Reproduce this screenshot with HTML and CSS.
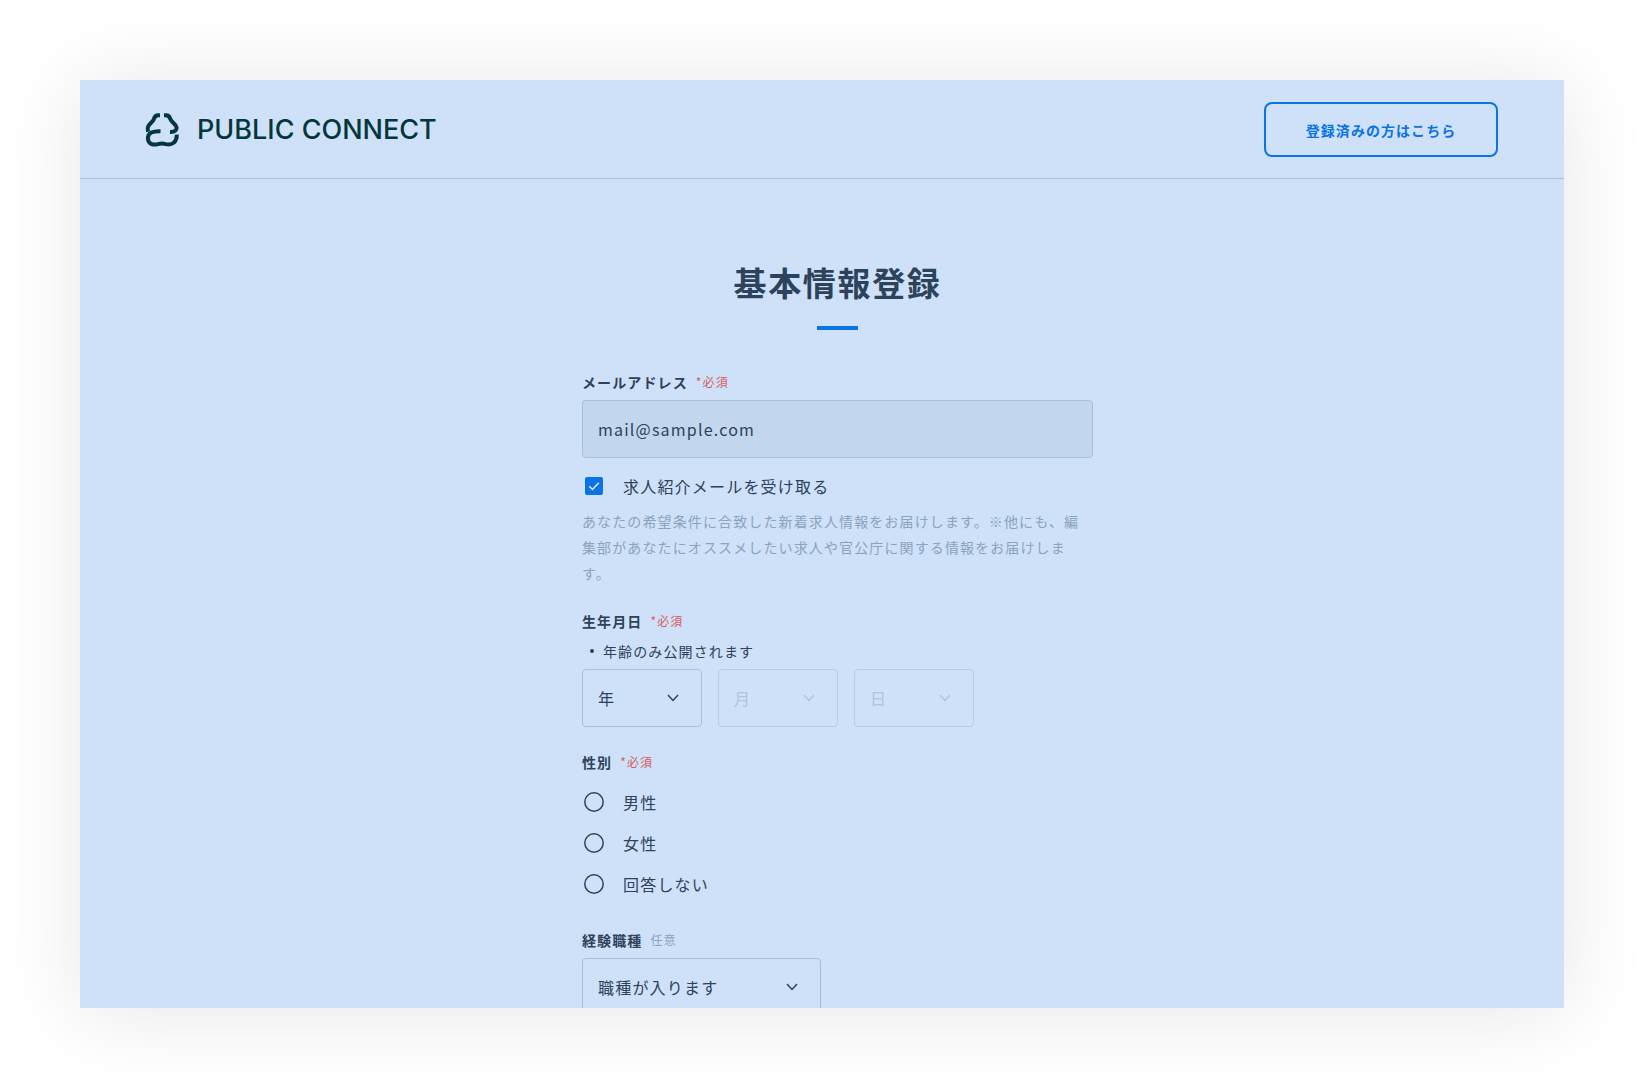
FILE: index.html
```html
<!DOCTYPE html>
<html lang="ja">
<head>
<meta charset="utf-8">
<meta name="viewport" content="width=device-width, initial-scale=1">
<title>基本情報登録 | PUBLIC CONNECT</title>
<link rel="stylesheet" href="styles.css">
</head>
<body>
<div class="window">
  <header class="header">
    <a class="logo" href="#">
      <svg class="logo-mark" viewBox="0 0 34 34" aria-hidden="true">
        <path d="M15 2.200H13C10.400 2.200 9.400 4 8.800 6.200C8 9.200 3.800 10.600 2.900 14.200C2.600 15.800 2.700 17.300 3.100 18.700"/>
        <path d="M19 2.200H21C23.600 2.200 24.800 4 25.400 6.200C26.400 9.200 30.600 10.600 31.500 14.200C32 17 29.800 19.300 25 19"/>
        <path d="M15.500 18.200C8 17.800 2.900 20 2.900 25.200C3.100 31 8.200 32.500 13 31.100C15.700 30.300 18 30.300 20.700 31.100C27 32.600 32 29.300 31.800 21.600"/>
      </svg>
      <span class="logo-text">PUBLIC CONNECT</span>
    </a>
    <button class="login" type="button">登録済みの方はこちら</button>
  </header>

  <main class="main">
    <form class="form">
      <h1 class="title">基本情報登録</h1>

      <div class="field">
        <label class="label" for="email">メールアドレス<span class="required">*必須</span></label>
        <input class="input" id="email" type="email" value="mail@sample.com" readonly>
        <div class="newsletter">
          <label class="choice">
            <span class="mark">
              <input class="checkbox" type="checkbox" checked>
              <svg class="tick" viewBox="0 0 12 12" aria-hidden="true"><path d="M1.200 6.300L4.500 9.500L10.800 2.800"/></svg>
            </span>
            求人紹介メールを受け取る
          </label>
          <p class="help">あなたの希望条件に合致した新着求人情報をお届けします。※他にも、編集部があなたにオススメしたい求人や官公庁に関する情報をお届けします。</p>
        </div>
      </div>

      <div class="field">
        <label class="label" for="year">生年月日<span class="required">*必須</span></label>
        <ul class="notes"><li class="note">年齢のみ公開されます</li></ul>
        <div class="dates">
          <div class="select">
            <select class="control" id="year"><option>年</option></select>
            <svg class="chevron" viewBox="0 0 12 8" aria-hidden="true"><path d="M1 1L6 6.500L11 1"/></svg>
          </div>
          <div class="select disabled">
            <select class="control" aria-label="月" disabled><option>月</option></select>
            <svg class="chevron" viewBox="0 0 12 8" aria-hidden="true"><path d="M1 1L6 6.500L11 1"/></svg>
          </div>
          <div class="select disabled">
            <select class="control" aria-label="日" disabled><option>日</option></select>
            <svg class="chevron" viewBox="0 0 12 8" aria-hidden="true"><path d="M1 1L6 6.500L11 1"/></svg>
          </div>
        </div>
      </div>

      <div class="field" role="radiogroup" aria-labelledby="gender">
        <div class="label" id="gender">性別<span class="required">*必須</span></div>
        <div class="choices">
          <label class="choice">
            <span class="mark">
              <input class="radio" type="radio" name="gender">
              <svg class="ring" viewBox="0 0 20 20" aria-hidden="true"><circle cx="10" cy="10" r="9.200"/></svg>
            </span>
            男性
          </label>
          <label class="choice">
            <span class="mark">
              <input class="radio" type="radio" name="gender">
              <svg class="ring" viewBox="0 0 20 20" aria-hidden="true"><circle cx="10" cy="10" r="9.200"/></svg>
            </span>
            女性
          </label>
          <label class="choice">
            <span class="mark">
              <input class="radio" type="radio" name="gender">
              <svg class="ring" viewBox="0 0 20 20" aria-hidden="true"><circle cx="10" cy="10" r="9.200"/></svg>
            </span>
            回答しない
          </label>
        </div>
      </div>

      <div class="field">
        <label class="label" for="job">経験職種<span class="optional">任意</span></label>
        <div class="select wide">
          <select class="control" id="job"><option>職種が入ります</option></select>
          <svg class="chevron" viewBox="0 0 12 8" aria-hidden="true"><path d="M1 1L6 6.500L11 1"/></svg>
        </div>
      </div>
    </form>
  </main>
</div>
</body>
</html>
```
FILE: styles.css
```css
:root {
  --bg: #cee1f9;
  --text: #2d425b;
  --blue: #0a73e8;
  --line: #a8bfda;
  --muted: #8ba3bd;
  --red: #d85c5c;
}

* {
  box-sizing: border-box;
}

body {
  margin: 0;
  padding: 80px;
  background: #fff;
  color: var(--text);
  font-family: "Noto Sans CJK JP", sans-serif;
  font-size: 16px;
  line-height: 24px;
  letter-spacing: 0.075em;
}

button,
input,
select {
  margin: 0;
  color: inherit;
  font: inherit;
  letter-spacing: inherit;
}

.window {
  height: calc(100vh - 160px);
  overflow: hidden;
  background: var(--bg);
  box-shadow: 0 4px 80px rgba(0, 0, 0, 0.1);
}

.header {
  display: flex;
  align-items: center;
  justify-content: space-between;
  padding: 22px 66px 21px 65px;
  border-bottom: 1px solid var(--line);
}

.logo {
  display: flex;
  align-items: center;
  gap: 18px;
  color: #04373c;
  text-decoration: none;
}

.logo-mark {
  width: 34px;
  height: 34px;
  fill: none;
  stroke: currentColor;
  stroke-width: 4;
}

.logo-text {
  font-family: Inter, sans-serif;
  font-size: 27px;
  font-weight: 500;
  line-height: 32px;
  letter-spacing: 0;
}

.login {
  width: 234px;
  height: 55px;
  padding: 0;
  border: 2px solid var(--blue);
  border-radius: 8px;
  background: transparent;
  color: var(--blue);
  font-size: 14px;
  font-weight: 700;
  letter-spacing: 0.075em;
}

.main {
  padding: 79px 0 80px 31px;
}

.form {
  display: flex;
  flex-direction: column;
  gap: 23px;
  max-width: 511px;
  margin: 0 auto;
}

.title {
  display: flex;
  flex-direction: column;
  align-items: center;
  gap: 20px;
  margin: 0 0 17px;
  font-size: 33px;
  font-weight: 700;
  line-height: 48px;
  letter-spacing: 0.05em;
}

.title::after {
  content: "";
  width: 41px;
  height: 4px;
  background: var(--blue);
}

.field {
  display: flex;
  flex-direction: column;
  gap: 6px;
}

.label {
  display: flex;
  align-items: center;
  gap: 8px;
  font-size: 14px;
  font-weight: 700;
  letter-spacing: 0.08em;
}

.required,
.optional {
  font-size: 12px;
  font-weight: 400;
}

.required {
  color: var(--red);
}

.optional {
  color: var(--muted);
}

.input {
  width: 100%;
  height: 58px;
  padding: 0 15px;
  border: 1px solid var(--line);
  border-radius: 4px;
  background: #c2d7ee;
}

.choices {
  padding: 1px 0;
}

.choice {
  display: flex;
  align-items: center;
  gap: 17px;
  height: 41px;
}

.newsletter .choice {
  height: 44px;
}

.mark {
  display: grid;
  place-items: center;
  width: 24px;
  height: 24px;
}

.mark > * {
  grid-area: 1 / 1;
}

.checkbox {
  appearance: none;
  width: 18px;
  height: 18px;
  border-radius: 2px;
}

.checkbox:checked {
  background: var(--blue);
}

.tick,
.ring {
  fill: none;
  stroke-width: 1.5;
  pointer-events: none;
}

.tick {
  width: 12px;
  height: 12px;
  stroke: #e4effc;
}

.radio,
.ring {
  width: 20px;
  height: 20px;
}

.radio {
  appearance: none;
  border-radius: 50%;
}

.ring {
  stroke: currentColor;
}

.radio:checked {
  border: 6px solid var(--blue);
}

.help {
  margin: 0;
  color: var(--muted);
  font-size: 14px;
  line-height: 26px;
  letter-spacing: 0.08em;
}

.notes {
  margin: 0;
  padding: 0 0 0 8px;
  font-size: 14px;
  letter-spacing: 0.08em;
  list-style: none;
}

.note {
  display: flex;
  align-items: center;
  gap: 9px;
}

.note::before {
  content: "";
  width: 4px;
  height: 4px;
  border-radius: 50%;
  background: currentColor;
}

.dates {
  display: flex;
  gap: 16px;
}

.select {
  display: grid;
  align-items: center;
  width: 120px;
}

.select > * {
  grid-area: 1 / 1;
}

.wide {
  width: 239px;
}

.control {
  appearance: none;
  width: 100%;
  height: 58px;
  padding: 0 15px;
  border: 1px solid var(--line);
  border-radius: 4px;
  background: transparent;
}

.chevron {
  justify-self: end;
  width: 12px;
  height: 8px;
  margin-right: 23px;
  fill: none;
  stroke: currentColor;
  stroke-width: 1.5;
  pointer-events: none;
}

.disabled {
  color: #afc4df;
}

.disabled .control {
  border-color: #b8cce6;
  opacity: 1;
}
```
